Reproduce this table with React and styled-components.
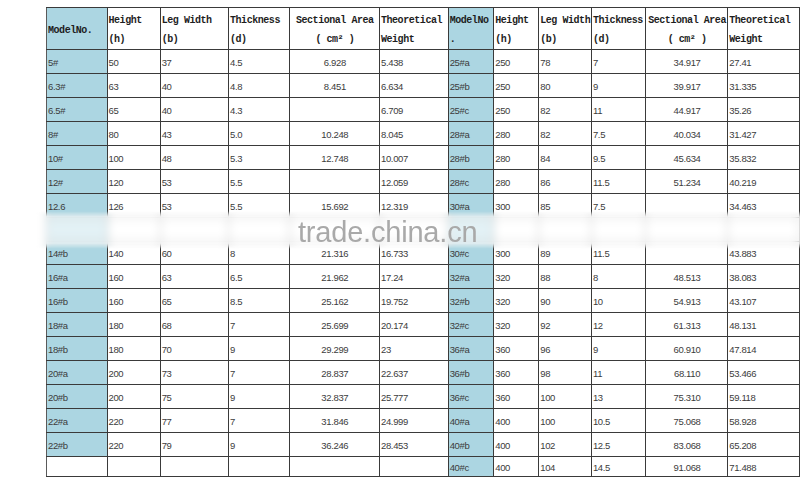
import React from "react";
import styled, { createGlobalStyle } from "styled-components";

const Global = createGlobalStyle`
  html, body { margin: 0; padding: 0; background: #fff; }
`;

const Page = styled.div`
  position: relative;
  width: 800px;
  height: 483px;
  box-sizing: border-box;
  padding: 7px 0 0 46px;
  overflow: hidden;
  background: #fff;
`;

const Table = styled.table`
  border-collapse: collapse;
  table-layout: fixed;
  width: 754px;
`;

const Row = styled.tr`
  height: ${(p) => p.$h}px;
`;

const Head = styled.th`
  font-family: "Liberation Mono", "DejaVu Sans Mono", monospace;
  font-weight: bold;
  font-size: 10px;
  letter-spacing: -0.45px;
  color: #1e1e1e;
  text-align: ${(p) => (p.$center ? "center" : "left")};
  vertical-align: top;
  padding: ${(p) => (p.$mid ? "13px" : "3px")} 0 0 1px;
  line-height: 19px;
  white-space: nowrap;
  overflow: hidden;
  background: ${(p) => (p.$blue ? "#acd6e2" : "#fff")};
  border: 1px solid #3a3a3a;
  border-left-color: ${(p) => (p.$dark ? "#111" : "#5a5a5a")};
`;

const Cell = styled.td`
  font-family: "Liberation Sans", Arial, sans-serif;
  font-size: 9.5px;
  letter-spacing: -0.35px;
  color: #3c3c3c;
  text-align: ${(p) => (p.$center ? "center" : "left")};
  vertical-align: middle;
  padding: 3px 0 0 1px;
  line-height: 12px;
  white-space: nowrap;
  overflow: hidden;
  background: ${(p) => (p.$blue ? "#acd6e2" : "#fff")};
  border: 1px solid #3a3a3a;
  border-left-color: ${(p) => (p.$dark ? "#111" : "#5a5a5a")};
`;

const Band = styled.div`
  position: absolute;
  left: 36px;
  right: 0;
  top: 211px;
  height: 38px;
  background: rgba(255, 255, 255, 0.66);
  backdrop-filter: blur(4px);
  -webkit-mask-image: linear-gradient(to bottom, transparent 0%, #000 15%, #000 85%, transparent 100%);
  mask-image: linear-gradient(to bottom, transparent 0%, #000 15%, #000 85%, transparent 100%);
`;

const Watermark = styled.span`
  position: absolute;
  left: 298px;
  top: 218px;
  font-family: "Liberation Sans", Arial, sans-serif;
  font-size: 29px;
  line-height: 1;
  color: #a9a9a9;
  letter-spacing: -0.2px;
`;

const widths = [60.5, 53.2, 68.3, 60.7, 90.3, 68.7, 45.6, 45, 52.7, 54, 82.3, 72];

const rows = [
  ["5#", "50", "37", "4.5", "6.928", "5.438", "25#a", "250", "78", "7", "34.917", "27.41"],
  ["6.3#", "63", "40", "4.8", "8.451", "6.634", "25#b", "250", "80", "9", "39.917", "31.335"],
  ["6.5#", "65", "40", "4.3", "", "6.709", "25#c", "250", "82", "11", "44.917", "35.26"],
  ["8#", "80", "43", "5.0", "10.248", "8.045", "28#a", "280", "82", "7.5", "40.034", "31.427"],
  ["10#", "100", "48", "5.3", "12.748", "10.007", "28#b", "280", "84", "9.5", "45.634", "35.832"],
  ["12#", "120", "53", "5.5", "", "12.059", "28#c", "280", "86", "11.5", "51.234", "40.219"],
  ["12.6", "126", "53", "5.5", "15.692", "12.319", "30#a", "300", "85", "7.5", "", "34.463"],
  ["", "", "", "", "", "", "", "", "", "", "", ""],
  ["14#b", "140", "60", "8", "21.316", "16.733", "30#c", "300", "89", "11.5", "", "43.883"],
  ["16#a", "160", "63", "6.5", "21.962", "17.24", "32#a", "320", "88", "8", "48.513", "38.083"],
  ["16#b", "160", "65", "8.5", "25.162", "19.752", "32#b", "320", "90", "10", "54.913", "43.107"],
  ["18#a", "180", "68", "7", "25.699", "20.174", "32#c", "320", "92", "12", "61.313", "48.131"],
  ["18#b", "180", "70", "9", "29.299", "23", "36#a", "360", "96", "9", "60.910", "47.814"],
  ["20#a", "200", "73", "7", "28.837", "22.637", "36#b", "360", "98", "11", "68.110", "53.466"],
  ["20#b", "200", "75", "9", "32.837", "25.777", "36#c", "360", "100", "13", "75.310", "59.118"],
  ["22#a", "220", "77", "7", "31.846", "24.999", "40#a", "400", "100", "10.5", "75.068", "58.928"],
  ["22#b", "220", "79", "9", "36.246", "28.453", "40#b", "400", "102", "12.5", "83.068", "65.208"],
  ["", "", "", "", "", "", "40#c", "400", "104", "14.5", "91.068", "71.488"],
];

const isBlue = (ci, ri) => (ci === 0 && ri < rows.length - 1) || ci === 6;
const isCenter = (ci) => ci === 4 || ci === 10;
const isDark = (ci) => ci === 5 || ci === 11;

export default function App() {
  return (
    <>
      <Global />
      <Page>
        <Table>
          <colgroup>
            {widths.map((w, i) => (
              <col key={i} style={{ width: w }} />
            ))}
          </colgroup>
          <tbody>
            <Row $h={38.5}>
              <Head $blue $mid>ModelNo.</Head>
              <Head>Height<br />(h)</Head>
              <Head>Leg Width<br />(b)</Head>
              <Head>Thickness<br />(d)</Head>
              <Head $center>Sectional  Area<br />( cm² )</Head>
              <Head $dark>Theoretical<br />Weight</Head>
              <Head $blue>ModelNo<br />.</Head>
              <Head>Height<br />(h)</Head>
              <Head>Leg Width<br />(b)</Head>
              <Head>Thickness<br />(d)</Head>
              <Head $center>Sectional  Area<br />( cm² )</Head>
              <Head $dark>Theoretical<br />Weight</Head>
            </Row>
            {rows.map((r, ri) => (
              <Row key={ri} $h={ri === rows.length - 1 ? 20 : 23.95}>
                {r.map((v, ci) => (
                  <Cell
                    key={ci}
                    $blue={isBlue(ci, ri)}
                    $center={isCenter(ci)}
                    $dark={isDark(ci)}
                  >
                    {v}
                  </Cell>
                ))}
              </Row>
            ))}
          </tbody>
        </Table>
        <Band />
        <Watermark>trade.china.cn</Watermark>
      </Page>
    </>
  );
}
